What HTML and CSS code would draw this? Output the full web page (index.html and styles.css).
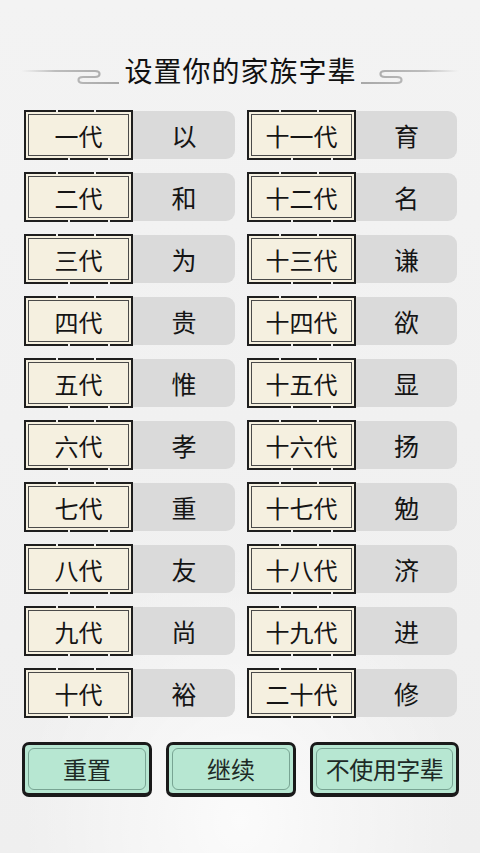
FILE: index.html
```html
<!DOCTYPE html>
<html lang="zh">
<head>
<meta charset="utf-8">
<link rel="stylesheet" href="styles.css">
</head>
<body>
<div class="page">
  <div class="title-row">
    <svg class="deco" viewBox="0 0 98 24" width="98" height="24">
      <defs>
        <linearGradient id="fadeL" x1="0" x2="1" y1="0" y2="0">
          <stop offset="0" stop-color="#c4c4c4" stop-opacity="0"/>
          <stop offset="0.35" stop-color="#bdbdbd"/>
          <stop offset="1" stop-color="#a8a8a8"/>
        </linearGradient>
      </defs>
      <path d="M0 8 H74 C80 8 80 14 74 14 H62 C56 14 56 20 62 20 H98" fill="none" stroke="url(#fadeL)" stroke-width="2.2" stroke-linecap="round"/>
    </svg>
    <h1 class="title">设置你的家族字辈</h1>
    <svg class="deco flip" viewBox="0 0 98 24" width="98" height="24">
      <defs>
        <linearGradient id="fadeR" x1="0" x2="1" y1="0" y2="0">
          <stop offset="0" stop-color="#c4c4c4" stop-opacity="0"/>
          <stop offset="0.35" stop-color="#bdbdbd"/>
          <stop offset="1" stop-color="#a8a8a8"/>
        </linearGradient>
      </defs>
      <path d="M0 8 H74 C80 8 80 14 74 14 H62 C56 14 56 20 62 20 H98" fill="none" stroke="url(#fadeR)" stroke-width="2.2" stroke-linecap="round"/>
    </svg>
  </div>

  <div class="grid">
    <div class="row"><div class="label">一代</div><div class="value">以</div></div>
    <div class="row"><div class="label">十一代</div><div class="value">育</div></div>
    <div class="row"><div class="label">二代</div><div class="value">和</div></div>
    <div class="row"><div class="label">十二代</div><div class="value">名</div></div>
    <div class="row"><div class="label">三代</div><div class="value">为</div></div>
    <div class="row"><div class="label">十三代</div><div class="value">谦</div></div>
    <div class="row"><div class="label">四代</div><div class="value">贵</div></div>
    <div class="row"><div class="label">十四代</div><div class="value">欲</div></div>
    <div class="row"><div class="label">五代</div><div class="value">惟</div></div>
    <div class="row"><div class="label">十五代</div><div class="value">显</div></div>
    <div class="row"><div class="label">六代</div><div class="value">孝</div></div>
    <div class="row"><div class="label">十六代</div><div class="value">扬</div></div>
    <div class="row"><div class="label">七代</div><div class="value">重</div></div>
    <div class="row"><div class="label">十七代</div><div class="value">勉</div></div>
    <div class="row"><div class="label">八代</div><div class="value">友</div></div>
    <div class="row"><div class="label">十八代</div><div class="value">济</div></div>
    <div class="row"><div class="label">九代</div><div class="value">尚</div></div>
    <div class="row"><div class="label">十九代</div><div class="value">进</div></div>
    <div class="row"><div class="label">十代</div><div class="value">裕</div></div>
    <div class="row"><div class="label">二十代</div><div class="value">修</div></div>
  </div>

  <div class="buttons">
    <div class="btn btn-s">重置</div>
    <div class="btn btn-s">继续</div>
    <div class="btn btn-l">不使用字辈</div>
  </div>
</div>
</body>
</html>
```

FILE: styles.css
```css
html, body {
  margin: 0;
  padding: 0;
}
body {
  width: 480px;
  height: 853px;
  overflow: hidden;
  background: #f0f0f0;
  font-family: "Noto Sans CJK SC", "Noto Sans", sans-serif;
  color: #1c1c1c;
}
.page {
  width: 480px;
  height: 853px;
  background:
    radial-gradient(ellipse 220px 260px at 240px 820px, rgba(255,255,255,0.75), rgba(255,255,255,0) 100%),
    linear-gradient(#f3f3f3, #efefef);
  display: flex;
  flex-direction: column;
}
.title-row {
  display: flex;
  align-items: center;
  justify-content: center;
  gap: 5px;
  padding-top: 52px;
  height: 36px;
}
.deco {
  display: block;
  margin-top: 10px;
}
.flip {
  transform: scaleX(-1);
}
.title {
  margin: 0;
  font-size: 28px;
  font-weight: 400;
  line-height: 36px;
  letter-spacing: 1px;
  margin-right: -1px;
  color: #111;
}
.grid {
  margin-top: 22px;
  margin-left: 24px;
  display: grid;
  grid-template-columns: 211px 210px;
  column-gap: 12px;
  row-gap: 12px;
  grid-auto-rows: 50px;
}
.row {
  display: flex;
  align-items: center;
}
.label {
  width: 109px;
  height: 50px;
  box-sizing: border-box;
  flex: none;
  background: #f5f0e0;
  border: 2px solid #1e1e1e;
  box-shadow: inset 0 0 0 2px #f5f0e0, inset 0 0 0 3px #4a4a4a;
  display: flex;
  align-items: center;
  justify-content: center;
  font-size: 24px;
  color: #151515;
  position: relative;
}
.label::after {
  content: "";
  position: absolute;
  left: 30px;
  top: -2px;
  width: 2px;
  height: 2px;
  background: #f0f0f0;
  box-shadow: 38px 0 0 #f0f0f0, 12px 48px 0 #f0f0f0, 52px 48px 0 #f0f0f0;
}
.value {
  flex: 1;
  height: 48px;
  background: #dadada;
  border-radius: 0 9px 9px 0;
  display: flex;
  align-items: center;
  justify-content: center;
  font-size: 25px;
  color: #151515;
}
.buttons {
  display: flex;
  gap: 14px;
  padding-left: 22px;
  margin-top: 24px;
}
.btn {
  height: 55px;
  box-sizing: border-box;
  background: #b7e7d2;
  border: 3px solid #1a1a1a;
  border-bottom-width: 4px;
  border-radius: 7px;
  display: flex;
  align-items: center;
  justify-content: center;
  font-size: 24px;
  color: #1e2a26;
  position: relative;
}
.btn::before {
  content: "";
  position: absolute;
  inset: 3px;
  border: 1px solid rgba(70,110,95,0.55);
  border-radius: 6px;
}
.btn-s {
  width: 130px;
  padding-bottom: 2px;
}
.btn-l {
  width: 149px;
  padding-bottom: 2px;
  letter-spacing: -0.5px;
}
```
